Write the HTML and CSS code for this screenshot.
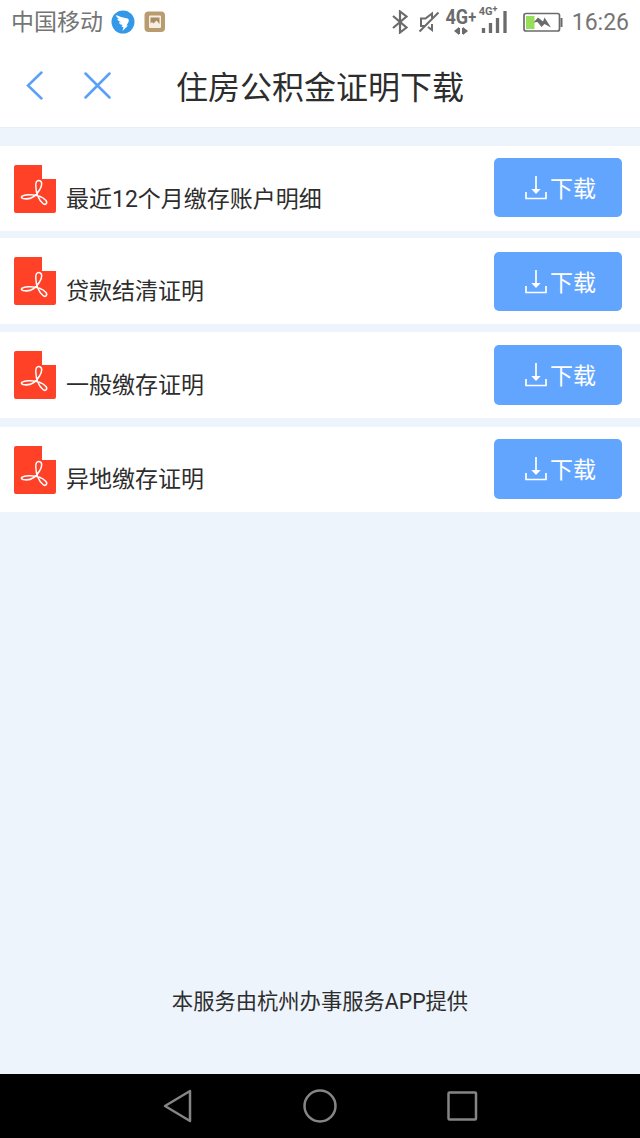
FILE: index.html
```html
<!DOCTYPE html>
<html lang="zh-CN">
<head>
    <meta charset="UTF-8">
    <meta name="viewport" content="width=device-width, initial-scale=1.0">
    <title>住房公积金证明下载</title>
    <link rel="stylesheet" href="styles.css">
</head>
<body>
    <svg class="defs" width="0" height="0">
        <symbol id="pdf" viewBox="0 0 42 48">
            <path d="M2 0H28V14H42V46Q42 48 40 48H2Q0 48 0 46V2Q0 0 2 0Z" fill="#fe4127"/>
            <path d="M25 15.500C29 16 28 21 25.500 25C22 31 16 35 9 33.500C5 32 9 30 14 29.800C20 29.500 28 31 32 35.500C34 38.500 31 40.500 29 38.500C25 35 22 28 21.800 21C21.500 17 23 15.300 25 15.500Z" fill="none" stroke="#fff" stroke-width="1.500" stroke-linejoin="round"/>
        </symbol>
        <symbol id="download" viewBox="0 0 22 24">
            <path d="M11 0V15M1 16V22.500H21V16" fill="none" stroke="#fff" stroke-width="1.700"/>
            <path d="M6.300 13H15.700L11 18Z" fill="#fff"/>
        </symbol>
    </svg>

    <div class="status-bar">
        <span class="carrier">中国移动</span>
        <svg class="app-bird" width="24" height="24" viewBox="0 0 24 24">
            <circle cx="12" cy="12" r="11.500" fill="#3398e8"/>
            <path d="M5 5Q10 7.500 16.500 8.500Q18.500 9 17.500 12L15.500 15.500H17L11.500 21L12.500 17H10.500L11.500 15Q8.500 14.500 7.800 12.500L10 12Q6.500 11 6.300 8.800L8 9Q5 7.500 5 5Z" fill="#fff"/>
        </svg>
        <svg class="app-gallery" width="22" height="22" viewBox="0 0 22 22">
            <rect x=".5" y=".5" width="20.500" height="20.500" rx="4" fill="#b89c70"/>
            <rect x="5" y="4.500" width="12" height="12.500" rx="1" fill="#f5efe3"/>
            <path d="M6.500 6.500H15.500V13L12.500 9.500L9.500 12.500L8 11L6.500 12.500Z" fill="#a88c62"/>
        </svg>
        <div class="status-right">
            <svg class="bluetooth" width="18" height="24" viewBox="0 0 18 24">
                <path d="M2 6L15.500 17.500L9 22.500V1.500L15.500 6.500L2 18" fill="none" stroke="#6b6b6b" stroke-width="2.200"/>
            </svg>
            <svg class="mute" width="22" height="24" viewBox="0 0 22 24">
                <path d="M7 16H3V8.500H7.500L14 3.500V8M14 14V20L10 17M1.500 21.500L20.500 2.500" fill="none" stroke="#6b6b6b" stroke-width="2"/>
            </svg>
            <div class="network">
                <span class="network-type">4G<i>+</i></span>
                <svg width="14" height="8" viewBox="0 0 14 8">
                    <path d="M0 4L5 0V8ZM14 4L9 0V8Z" fill="#6b6b6b"/>
                    <path d="M5.500 1V7M8.500 1V7" stroke="#6b6b6b" stroke-width="1"/>
                </svg>
            </div>
            <div class="signal">
                <svg width="27" height="24" viewBox="0 0 27 24">
                    <path d="M3.500 18V23M10.500 13V23M17.500 8V23M25 1V23" stroke="#6b6b6b" stroke-width="3.300"/>
                </svg>
                <span class="signal-type">4G<sup>+</sup></span>
            </div>
            <svg class="battery" width="40" height="21" viewBox="0 0 40 21">
                <rect x="1" y="1.500" width="35.500" height="17.500" rx="2" fill="none" stroke="#6b6b6b" stroke-width="1.700"/>
                <path d="M38.500 6V15" stroke="#6b6b6b" stroke-width="2"/>
                <rect x="3" y="4" width="8.500" height="13" fill="#98df59"/>
                <path d="M10.500 10.500L15 5.500L20 9.500L21.500 5.500L28 15.500L21.500 12L18.500 15L14.500 10Z" fill="#6b6b6b"/>
            </svg>
            <span class="time">16:26</span>
        </div>
    </div>

    <header class="navbar">
        <svg class="back" width="20" height="32" viewBox="0 0 20 32">
            <path d="M18.500 2.500L5 15.500L18.500 28.500" fill="none" stroke="#5ba0f8" stroke-width="2.500" stroke-linecap="round"/>
        </svg>
        <svg class="close" width="28" height="28" viewBox="0 0 28 28">
            <path d="M2.500 1.500L26.500 25.500M26.500 1.500L2.500 25.500" fill="none" stroke="#5ba0f8" stroke-width="2.500" stroke-linecap="round"/>
        </svg>
        <h1>住房公积金证明下载</h1>
    </header>

    <main>
        <ul class="list">
            <li class="item">
                <svg class="pdf"><use href="#pdf"/></svg>
                <span class="name">最近12个月缴存账户明细</span>
                <button class="download"><svg><use href="#download"/></svg><span>下载</span></button>
            </li>
            <li class="item">
                <svg class="pdf"><use href="#pdf"/></svg>
                <span class="name">贷款结清证明</span>
                <button class="download"><svg><use href="#download"/></svg><span>下载</span></button>
            </li>
            <li class="item">
                <svg class="pdf"><use href="#pdf"/></svg>
                <span class="name">一般缴存证明</span>
                <button class="download"><svg><use href="#download"/></svg><span>下载</span></button>
            </li>
            <li class="item">
                <svg class="pdf"><use href="#pdf"/></svg>
                <span class="name">异地缴存证明</span>
                <button class="download"><svg><use href="#download"/></svg><span>下载</span></button>
            </li>
        </ul>
        <p class="provider">本服务由杭州办事服务APP提供</p>
    </main>

    <nav class="system-nav">
        <svg width="34" height="36" viewBox="0 0 34 36">
            <path d="M29 3L4 18L29 33Z" fill="none" stroke="#858585" stroke-width="2.500" stroke-linejoin="round"/>
        </svg>
        <svg width="36" height="36" viewBox="0 0 36 36">
            <circle cx="18" cy="18" r="15.500" fill="none" stroke="#858585" stroke-width="2.500"/>
        </svg>
        <svg width="34" height="36" viewBox="0 0 34 36">
            <rect x="3.500" y="4.500" width="27.500" height="27" rx="1" fill="none" stroke="#858585" stroke-width="2.500"/>
        </svg>
    </nav>
</body>
</html>
```

FILE: styles.css
```css
/* 全局样式 */
* { box-sizing: border-box; }
html, body {
    margin: 0;
    padding: 0;
    height: 100%;
}
body {
    display: flex;
    flex-direction: column;
    height: 1138px;
    overflow: hidden;
    font-family: Roboto, "Noto Sans CJK SC", sans-serif;
    color: #2d2d2d;
    background-color: #edf4fc;
}
svg {
    display: block;
    flex: none;
}
.defs {
    position: absolute;
}
/* 状态栏 */
.status-bar {
    display: flex;
    align-items: center;
    height: 44px;
    padding: 0 11px;
    background-color: #fff;
    color: #757575;
}
.carrier {
    padding-top: 2px;
    font-size: 23px;
    line-height: 42px;
}
.app-bird {
    margin-left: 8px;
}
.app-gallery {
    margin-left: 9px;
}
.status-right {
    display: flex;
    align-items: center;
    margin-left: auto;
}
.mute {
    margin-left: 9px;
}
.network {
    display: flex;
    flex-direction: column;
    align-items: center;
    width: 33px;
    height: 30px;
    margin-left: 5px;
    color: #6b6b6b;
}
.network-type {
    font-size: 21px;
    font-weight: bold;
    line-height: 20px;
    white-space: nowrap;
    transform: scaleX(0.86);
}
.network-type i {
    font-style: normal;
    font-size: 17px;
    vertical-align: 1px;
}
.signal {
    position: relative;
    margin-left: 2px;
}
.signal-type {
    position: absolute;
    top: -5px;
    left: -1px;
    font-size: 11px;
    font-weight: bold;
    line-height: 14px;
    color: #6b6b6b;
}
.signal-type sup {
    font-size: 9px;
    line-height: 0;
    vertical-align: 3px;
}
.battery {
    margin-left: 16px;
}
.time {
    margin-left: 9px;
    padding-top: 2px;
    font-size: 23px;
    line-height: 42px;
}
/* 顶部导航栏 */
.navbar {
    display: flex;
    align-items: center;
    height: 83px;
    padding-left: 23px;
    background-color: #fff;
}
.navbar .close {
    margin-left: 40px;
}
.navbar h1 {
    margin: 5px 0 0 65px;
    font-size: 32px;
    font-weight: normal;
    line-height: 46px;
}
/* 证明列表 */
main {
    display: flex;
    flex: 1;
    flex-direction: column;
    border-top: 1px solid #e8eef5;
}
.list {
    margin: 18px 0 0;
    padding: 0;
    list-style: none;
}
.item {
    display: flex;
    align-items: center;
    height: 86px;
    margin-bottom: 8px;
    padding: 0 18px 0 14px;
    background-color: #fff;
}
.item:first-child {
    height: 85px;
    margin-bottom: 7px;
}
.item:nth-child(3) {
    margin-bottom: 9px;
}
.item:last-child {
    height: 85px;
}
.pdf {
    align-self: flex-start;
    width: 42px;
    height: 48px;
    margin-top: 19px;
}
.name {
    align-self: flex-start;
    margin: 37px 0 0 10px;
    font-size: 23px;
    line-height: 34px;
}
.item:last-child .name {
    margin-top: 36px;
}
.download {
    display: flex;
    align-items: center;
    width: 128px;
    height: 60px;
    margin-left: auto;
    padding: 0 0 0 31px;
    border: none;
    border-radius: 5px;
    background-color: #62a5fe;
    color: #fff;
    font-family: inherit;
    font-size: 23px;
    line-height: 34px;
}
.item:first-child .download {
    height: 59px;
    margin-bottom: 2px;
}
.item:nth-child(2) .download {
    height: 59px;
    margin-top: 1px;
}
.item:last-child .download {
    margin-bottom: 2px;
}
.download svg {
    width: 22px;
    height: 24px;
    margin-right: 3px;
}
.download span {
    padding-top: 4px;
}
/* 底部说明 */
.provider {
    margin: auto 0 56px;
    font-size: 21.300px;
    line-height: 32px;
    text-align: center;
}
/* 系统按键 */
.system-nav {
    display: flex;
    align-items: center;
    justify-content: space-between;
    height: 64px;
    padding: 0 161px;
    background-color: #000;
}
```
